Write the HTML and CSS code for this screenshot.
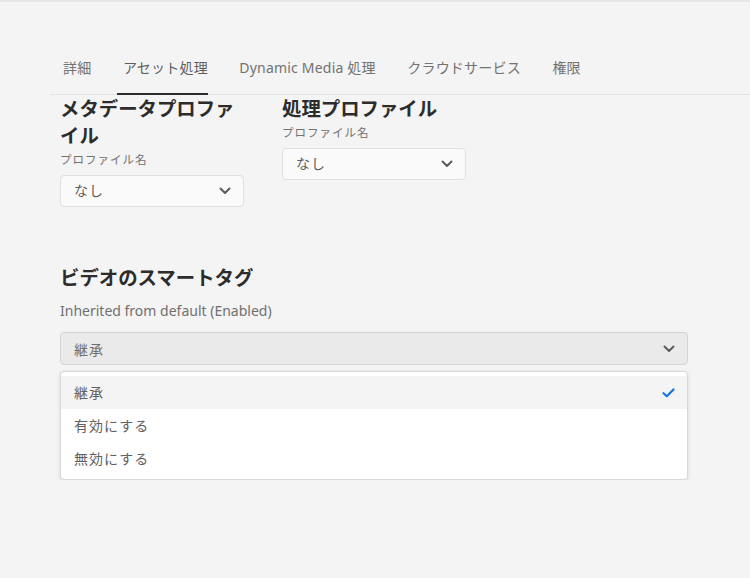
FILE: index.html
```html
<!DOCTYPE html>
<html lang="ja">
<head>
<meta charset="utf-8">
<title>アセット処理</title>
<link rel="stylesheet" href="styles.css">
</head>
<body>
<div class="topline"></div>
<nav class="tabs">
  <div class="tab">詳細</div>
  <div class="tab selected">アセット処理</div>
  <div class="tab">Dynamic Media 処理</div>
  <div class="tab">クラウドサービス</div>
  <div class="tab">権限</div>
</nav>
<main class="content">
  <div class="profiles">
    <div class="col">
      <h2 class="heading">メタデータプロファイル</h2>
      <div class="label">プロファイル名</div>
      <div class="picker">
        <span>なし</span>
        <svg class="chev" width="12" height="8" viewBox="0 0 12 8"><path d="M1.5 1.5 L6 6 L10.5 1.5" fill="none" stroke="#5c5c5c" stroke-width="2" stroke-linecap="round" stroke-linejoin="round"/></svg>
      </div>
    </div>
    <div class="col">
      <h2 class="heading">処理プロファイル</h2>
      <div class="label">プロファイル名</div>
      <div class="picker">
        <span>なし</span>
        <svg class="chev" width="12" height="8" viewBox="0 0 12 8"><path d="M1.5 1.5 L6 6 L10.5 1.5" fill="none" stroke="#5c5c5c" stroke-width="2" stroke-linecap="round" stroke-linejoin="round"/></svg>
      </div>
    </div>
  </div>

  <section class="smart">
    <h2 class="heading">ビデオのスマートタグ</h2>
    <p class="desc">Inherited from default (Enabled)</p>
    <div class="picker wide open">
      <span>継承</span>
      <svg class="chev" width="12" height="8" viewBox="0 0 12 8"><path d="M1.5 1.5 L6 6 L10.5 1.5" fill="none" stroke="#5c5c5c" stroke-width="2" stroke-linecap="round" stroke-linejoin="round"/></svg>
    </div>
    <ul class="menu">
      <li class="item active"><span>継承</span>
        <svg class="check" width="13" height="10" viewBox="0 0 13 10"><path d="M1.5 5.2 L4.8 8.2 L11.5 1.5" fill="none" stroke="#1473e6" stroke-width="2.2" stroke-linecap="round" stroke-linejoin="round"/></svg>
      </li>
      <li class="item"><span>有効にする</span></li>
      <li class="item"><span>無効にする</span></li>
    </ul>
  </section>
</main>
</body>
</html>
```

FILE: styles.css
```css
* { box-sizing: border-box; }

html, body {
  margin: 0;
  padding: 0;
  background: #f4f4f4;
  font-family: "Noto Sans", "Noto Sans CJK JP", sans-serif;
  color: #4b4b4b;
}

.topline {
  height: 2px;
  background: #e6e6e6;
}

.tabs {
  display: flex;
  gap: 31.5px;
  margin-left: 50px;
  padding-left: 13px;
  margin-top: 50px;
  border-bottom: 1px solid #e4e4e4;
}

.tab {
  position: relative;
  font-size: 14px;
  line-height: 20px;
  letter-spacing: 0.2px;
  padding: 6px 0 16px;
  color: #727272;
  white-space: nowrap;
}

.tab.selected {
  color: #5e5e5e;
}

.tab.selected::after {
  content: "";
  position: absolute;
  left: -6px;
  right: 0;
  bottom: -1px;
  height: 2px;
  background: #2c2c2c;
}

.content {
  padding-left: 60px;
}

.profiles {
  display: flex;
  gap: 38px;
}

.col {
  width: 184px;
}

.heading {
  margin: 0;
  font-size: 19.4px;
  line-height: 27px;
  font-weight: 700;
  color: #2c2c2c;
}

.label {
  margin-top: 3px;
  font-size: 11.5px;
  line-height: 16px;
  letter-spacing: 1px;
  color: #707070;
}

.picker {
  margin-top: 7px;
  height: 32px;
  display: flex;
  align-items: center;
  justify-content: space-between;
  padding: 0 12px 0 13px;
  background: #fafafa;
  border: 1px solid #e0e0e0;
  border-radius: 4px;
  font-size: 14px;
  color: #5a5a5a;
}

.picker span {
  letter-spacing: 1px;
  margin-top: -2px;
}

.chev {
  display: block;
}

.smart {
  margin-top: 57px;
  width: 628px;
}

.desc {
  margin: 10px 0 0;
  font-size: 14px;
  line-height: 20px;
  color: #707070;
}

.picker.wide {
  margin-top: 11px;
  height: 33px;
  background: #eaeaea;
  border-color: #d4d4d4;
  color: #6e6e6e;
}

.picker.wide span {
  margin-top: 0;
}

.menu {
  list-style: none;
  margin: 6px 0 0;
  padding: 4px 0;
  background: #fff;
  border: 1px solid #d8d8d8;
  border-radius: 4px;
  box-shadow: 0 1px 4px rgba(0, 0, 0, 0.12);
}

.item {
  height: 33px;
  display: flex;
  align-items: center;
  justify-content: space-between;
  padding: 0 12px 0 13px;
  font-size: 14px;
  color: #606060;
}

.item span {
  letter-spacing: 1px;
  margin-top: -1px;
}

.item.active {
  background: #f4f4f4;
}

.check {
  display: block;
}
```
